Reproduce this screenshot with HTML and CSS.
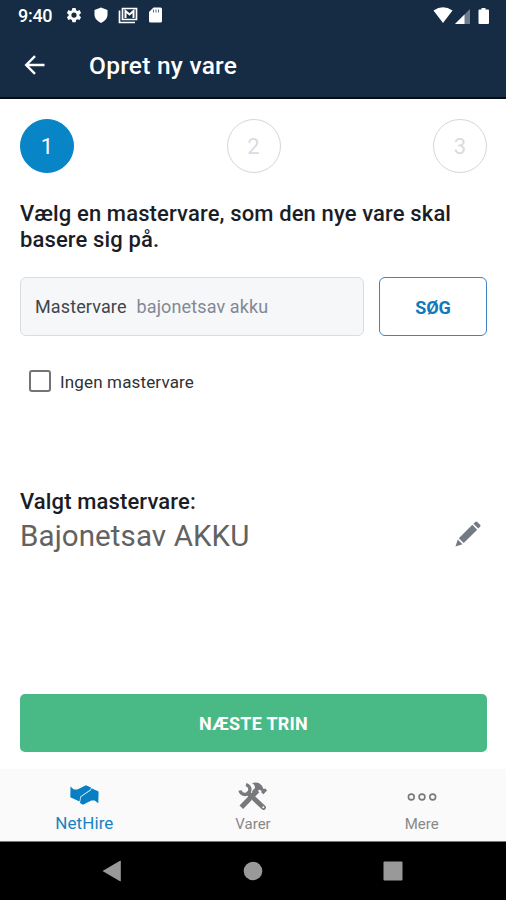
FILE: index.html
```html
<!DOCTYPE html>
<html lang="da">
<head>
<meta charset="utf-8">
<title>Opret ny vare</title>
<link rel="stylesheet" href="styles.css">
</head>
<body>
<div class="phone">
  <header class="header">
    <div class="status">
      <span class="time">9:40</span>
      <svg class="status-left" width="98" height="18" viewBox="0 0 98 18" fill="#fff">
        <path fill-rule="evenodd" d="M6.4 1h3.2l.5 2.2 1.3.7 2.1-.8 1.6 2.8-1.7 1.5v1.4l1.7 1.5-1.6 2.8-2.1-.8-1.3.7-.5 2.2H6.4l-.5-2.2-1.3-.7-2.1.8L.9 10.300l1.700-1.500V7.400L.9 5.900l1.600-2.800 2.100.8 1.300-.7zM8 5.500a2.600 2.600 0 1 0 0 5.200 2.600 2.600 0 0 0 0-5.200z"/>
        <path d="M35 .5l6.500 2.600v5q0 5-6.500 7.900-6.500-2.900-6.500-7.900v-5z"/>
        <path fill="none" stroke="#fff" stroke-width="1.700" d="M56.500 1.500h14v11h-14zM53.500 3.500v12h15.500"/>
        <path fill="none" stroke="#fff" stroke-width="2" d="M59.500 11V4l4 3.500 4-3.500v7"/>
        <path d="M87.500.5h7q1.500 0 1.500 1.500v12q0 1.500-1.500 1.500h-10q-1.500 0-1.500-1.500V5z"/>
        <path stroke="#152c44" stroke-width=".7" d="M87.500 2.500v3M90 2.500v3M92.500 2.500v3"/>
      </svg>
      <svg class="status-right" width="60" height="18" viewBox="0 0 60 18" fill="#fff">
        <path d="M.5 3.500Q10-3 19.500 3.500L10 16z"/>
        <path d="M22 17L37 2v15z" opacity=".38"/>
        <path d="M22 17l9.500-9.500V17z"/>
        <path d="M48.500 1h4v1.500H55q1 0 1 1V16q0 1-1 1h-8.500q-1 0-1-1V3.500q0-1 1-1h2z"/>
      </svg>
    </div>
    <div class="appbar">
      <svg class="back" width="22" height="20" viewBox="0 0 22 20" fill="none" stroke="#fff" stroke-width="2.400"><path d="M20.500 10H2.500M11 1.200L2.200 10l8.800 8.800"/></svg>
      <h1 class="title">Opret ny vare</h1>
    </div>
  </header>
  <main class="content">
    <div class="steps">
      <span class="step active">1</span>
      <span class="step">2</span>
      <span class="step">3</span>
    </div>
    <h2 class="lead">Vælg en mastervare, som den nye vare skal<br>basere sig på.</h2>
    <div class="search">
      <div class="field"><span class="label">Mastervare</span><span class="value">bajonetsav akku</span></div>
      <button class="search-btn">SØG</button>
    </div>
    <div class="check"><span class="box"></span><span class="check-label">Ingen mastervare</span></div>
    <section class="selected">
      <div>
        <h3 class="selected-title">Valgt mastervare:</h3>
        <div class="selected-name">Bajonetsav AKKU</div>
      </div>
      <svg class="pencil" width="28" height="28" viewBox="0 0 28 28" fill="#747986">
        <path d="M1.500 26.500l2.200-7 4.800 4.800z"/>
        <path d="M4.800 18.200L18.300 4.800l4.900 4.900L9.700 23.100z"/>
        <path d="M19.400 3.700l1.800-1.800q1-.9 2 0l2.900 2.900q.9 1 0 2l-1.800 1.800z"/>
      </svg>
    </section>
    <button class="next">NÆSTE TRIN</button>
  </main>
  <nav class="tabs">
    <div class="tab current">
      <svg width="30" height="30" viewBox="0 0 30 30" fill="#087fc2">
        <path d="M1.500 5.500l3.300 2.900 3.500.2L17 4.300l5 2.300-.5 2L11.300 15.400l-.8 5.200-9.200-4.400z"/>
        <path d="M22.500 7.300l7.100 3.300-.3 11.700-3.600-2.700h-3.400L14 23.800l-3-1.800.9-6 10-6.800z"/>
      </svg>
      <span class="tab-label">NetHire</span>
    </div>
    <div class="tab">
      <svg width="30" height="30" viewBox="0 0 30 30" fill="none" stroke="#77797c">
        <path stroke-width="5" d="M19.500 9.500L3.300 26.300"/>
        <path stroke-width="3.400" d="M2 9.500A5 5 0 1 0 8 3.600"/>
        <path stroke="#fafafa" stroke-width="5.800" d="M15 17l7 6.700"/>
        <path stroke-width="4.800" stroke-linecap="round" d="M10.500 12.500l15 14"/>
        <path fill="#77797c" stroke="none" d="M14 2.300q6-2.600 10 2.500l1.500 3.100 2-.4 1.500 2-3.500 3.700-2-1.500-.2-2.200-2.300-.8-3.800 4.500-3.300-3L17 7q0-3.500-3-4.700z"/>
        <circle cx="25.300" cy="26.300" r="1" fill="#fafafa" stroke="none"/>
      </svg>
      <span class="tab-label">Varer</span>
    </div>
    <div class="tab">
      <svg width="30" height="30" viewBox="0 0 30 30" fill="none" stroke="#77797c" stroke-width="1.600">
        <circle cx="4.300" cy="16" r="2.900"/><circle cx="15" cy="16" r="2.900"/><circle cx="25.700" cy="16" r="2.900"/>
      </svg>
      <span class="tab-label">Mere</span>
    </div>
  </nav>
  <div class="system">
    <svg width="20" height="22" viewBox="0 0 20 22" fill="#999"><path d="M.5 11L18 .8q.8-.4.8.500v19.400q0 .9-.8.500z"/></svg>
    <svg width="20" height="20" viewBox="0 0 20 20" fill="#999"><circle cx="10" cy="10" r="9.300"/></svg>
    <svg width="20" height="20" viewBox="0 0 20 20" fill="#999"><rect x=".5" y=".5" width="19" height="19" rx="1"/></svg>
  </div>
</div>
</body>
</html>
```

FILE: styles.css
```css
* { box-sizing: border-box; }
body { margin: 0; font-family: Roboto, sans-serif; background: #fff; }
h1, h2, h3 { margin: 0; font-weight: 500; }
button { font-family: inherit; padding: 0; }
svg { display: block; flex: none; }
.phone { width: 506px; height: 900px; display: flex; flex-direction: column; overflow: hidden; }
.header { height: 99px; background: #152c44; color: #fff; border-bottom: 2px solid #080b10; flex: none; }
.status { height: 32px; display: flex; align-items: center; padding: 0 13px 0 18px; }
.time { width: 48px; font-size: 18px; font-weight: 500; line-height: 32px; letter-spacing: -.3px; }
.status-right { margin-left: auto; }
.appbar { height: 65px; display: flex; align-items: center; padding-left: 24px; }
.title { margin-left: 43px; font-size: 24.500px; line-height: 30px; letter-spacing: .25px; padding-top: 2px; }
.content { flex: 1; display: flex; flex-direction: column; padding: 20px 19px 0 20px; }
.steps { display: flex; justify-content: space-between; }
.step { width: 54px; height: 54px; border: 1px solid #d3d6dc; border-radius: 50%; text-align: center; font-size: 22px; line-height: 54px; color: #d8dce3; }
.step.active { background: #0785c7; border-color: #0785c7; color: #fff; }
.lead { margin-top: 28px; font-size: 22px; line-height: 26px; color: #1b1d26; white-space: nowrap; letter-spacing: .13px; }
.search { display: flex; gap: 15px; margin-top: 24px; height: 59px; }
.field { width: 344px; background: #f5f7f9; border: 1px solid #d9dde1; border-radius: 6px; padding: 0 0 1px 14px; display: flex; align-items: center; gap: 10px; font-size: 18px; letter-spacing: .12px; }
.label { color: #42454b; }
.value { color: #838894; }
.search-btn { flex: 1; background: #fff; border: 1.500px solid #3f83c5; border-radius: 6px; color: #1377ba; font-size: 18px; font-weight: 700; padding-top: 2px; }
.check { display: flex; align-items: center; margin: 34px 0 0 9px; height: 22px; }
.box { width: 22px; height: 22px; border: 2px solid #747474; border-radius: 3px; }
.check-label { margin-left: 9px; padding-top: 1px; font-size: 17px; letter-spacing: .15px; color: #303134; }
.selected { display: flex; justify-content: space-between; margin-top: 97px; }
.selected-title { font-size: 22px; line-height: 26px; color: #1b1d26; letter-spacing: .13px; }
.selected-name { font-size: 29.500px; line-height: 38px; margin-top: 2px; color: #626262; letter-spacing: .1px; }
.pencil { margin: 31px 5px 0 0; }
.next { margin-top: auto; margin-bottom: 17px; height: 58px; border: 0; border-radius: 5px; background: #49b985; color: #fff; font-size: 18px; font-weight: 700; letter-spacing: .25px; padding-top: 1px; }
.tabs { height: 73px; display: flex; background: #fafafa; border-bottom: 1px solid #777; flex: none; }
.tab { flex: 1; display: flex; flex-direction: column; align-items: center; padding-top: 12px; color: #888; font-size: 15px; }
.tab-label { line-height: 20px; margin-top: 3px; }
.current { color: #1783c2; }
.current .tab-label { font-size: 17px; margin-top: 2px; letter-spacing: .1px; }
.system { height: 58px; flex: none; background: #000; display: flex; justify-content: space-between; align-items: center; padding: 0 103px 0 102px; }
```
